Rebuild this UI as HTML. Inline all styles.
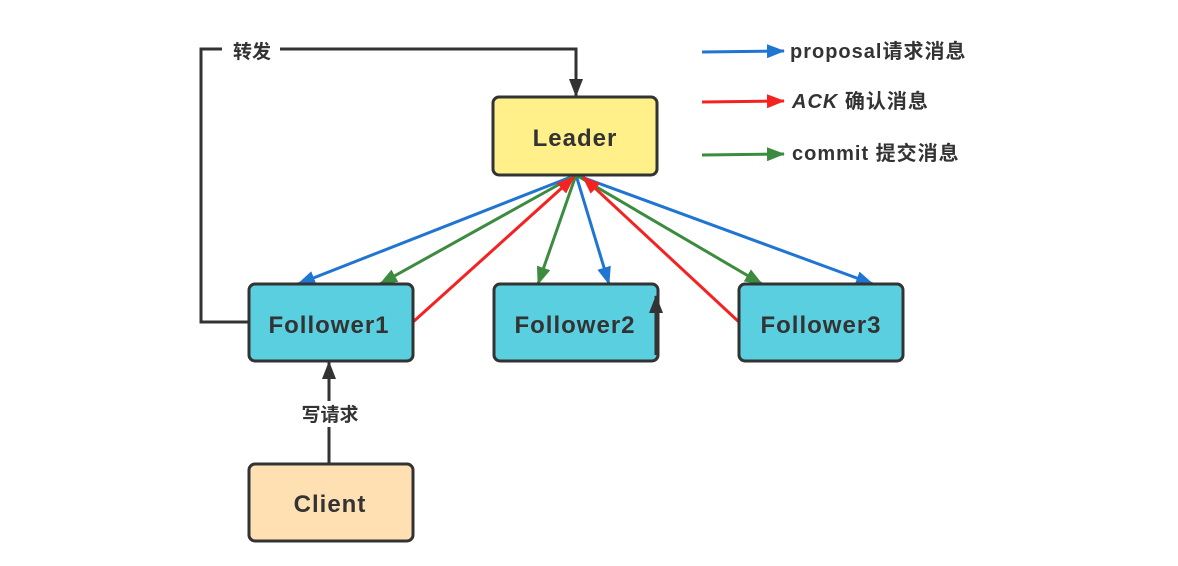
<!DOCTYPE html>
<html><head><meta charset="utf-8"><style>
html,body{margin:0;padding:0;background:#fff;}
svg{display:block;}
text{font-family:"Liberation Sans","Noto Sans CJK SC",sans-serif;fill:#333;}
</style></head><body>
<svg width="1178" height="566" viewBox="0 0 1178 566" xmlns="http://www.w3.org/2000/svg">
<defs>
<marker id="mb" viewBox="0 0 18 14" refX="17" refY="7" markerWidth="18" markerHeight="14" markerUnits="userSpaceOnUse" orient="auto"><path d="M0,0L18,7L0,14z" fill="#1f75d1"/></marker>
<marker id="mg" viewBox="0 0 18 14" refX="17" refY="7" markerWidth="18" markerHeight="14" markerUnits="userSpaceOnUse" orient="auto"><path d="M0,0L18,7L0,14z" fill="#3b8c3f"/></marker>
<marker id="mr" viewBox="0 0 18 14" refX="17" refY="7" markerWidth="18" markerHeight="14" markerUnits="userSpaceOnUse" orient="auto"><path d="M0,0L18,7L0,14z" fill="#f52222"/></marker>
<marker id="mk" viewBox="0 0 18 14" refX="17" refY="7" markerWidth="18" markerHeight="14" markerUnits="userSpaceOnUse" orient="auto"><path d="M0,0L18,7L0,14z" fill="#333"/></marker>
</defs>
<g stroke-width="3" fill="none">
<polyline points="249,322 201,322 201,49 576,49 576,96" stroke="#333" marker-end="url(#mk)"/>
<rect x="222" y="38" width="58" height="22" fill="#fff" stroke="none"/>
<line x1="329" y1="463" x2="329" y2="362" stroke="#333" marker-end="url(#mk)"/>
<rect x="290" y="401" width="80" height="26" fill="#fff" stroke="none"/>
</g>
<g stroke-width="3">
<line x1="576" y1="175" x2="298" y2="284" stroke="#1f75d1" marker-end="url(#mb)"/>
<line x1="576" y1="175" x2="609" y2="284" stroke="#1f75d1" marker-end="url(#mb)"/>
<line x1="576" y1="175" x2="873" y2="284" stroke="#1f75d1" marker-end="url(#mb)"/>
<line x1="576" y1="175" x2="380" y2="284" stroke="#3b8c3f" marker-end="url(#mg)"/>
<line x1="576" y1="175" x2="538" y2="284" stroke="#3b8c3f" marker-end="url(#mg)"/>
<line x1="576" y1="175" x2="762" y2="284" stroke="#3b8c3f" marker-end="url(#mg)"/>
<line x1="413" y1="322" x2="574" y2="177" stroke="#f52222" marker-end="url(#mr)"/>
<line x1="739" y1="322" x2="583" y2="177" stroke="#f52222" marker-end="url(#mr)"/>
</g>
<g stroke="#333" stroke-width="3">
<rect x="493" y="97" width="164" height="78" rx="6" fill="#fff08a"/>
<rect x="249" y="284" width="164" height="77" rx="6" fill="#5acfe0"/>
<rect x="494" y="284" width="164" height="77" rx="6" fill="#5acfe0"/>
<rect x="739" y="284" width="164" height="77" rx="6" fill="#5acfe0"/>
<rect x="249" y="464" width="164" height="77" rx="6" fill="#ffe0b3"/>
</g>
<line x1="656" y1="355" x2="656" y2="296" stroke="#333" stroke-width="3" marker-end="url(#mk)"/>
<g font-size="24" font-weight="bold" text-anchor="middle" letter-spacing="1">
<text x="575" y="146">Leader</text>
<text x="329" y="333">Follower1</text>
<text x="575" y="333">Follower2</text>
<text x="821" y="333">Follower3</text>
<text x="330" y="512">Client</text>
</g>
<text x="252" y="58" font-size="19" font-weight="bold" text-anchor="middle">转发</text>
<text x="330" y="421" font-size="19" font-weight="bold" text-anchor="middle">写请求</text>
<line x1="702" y1="52" x2="784" y2="51" stroke="#1f75d1" stroke-width="3" marker-end="url(#mb)"/>
<line x1="702" y1="102" x2="784" y2="101" stroke="#f52222" stroke-width="3" marker-end="url(#mr)"/>
<line x1="702" y1="155" x2="784" y2="154" stroke="#3b8c3f" stroke-width="3" marker-end="url(#mg)"/>
<g font-size="20" font-weight="bold" letter-spacing="1">
<text x="790" y="58">proposal请求消息</text>
<text x="792" y="108"><tspan font-style="italic">ACK</tspan> 确认消息</text>
<text x="792" y="160">commit 提交消息</text>
</g>
</svg>
</body></html>
